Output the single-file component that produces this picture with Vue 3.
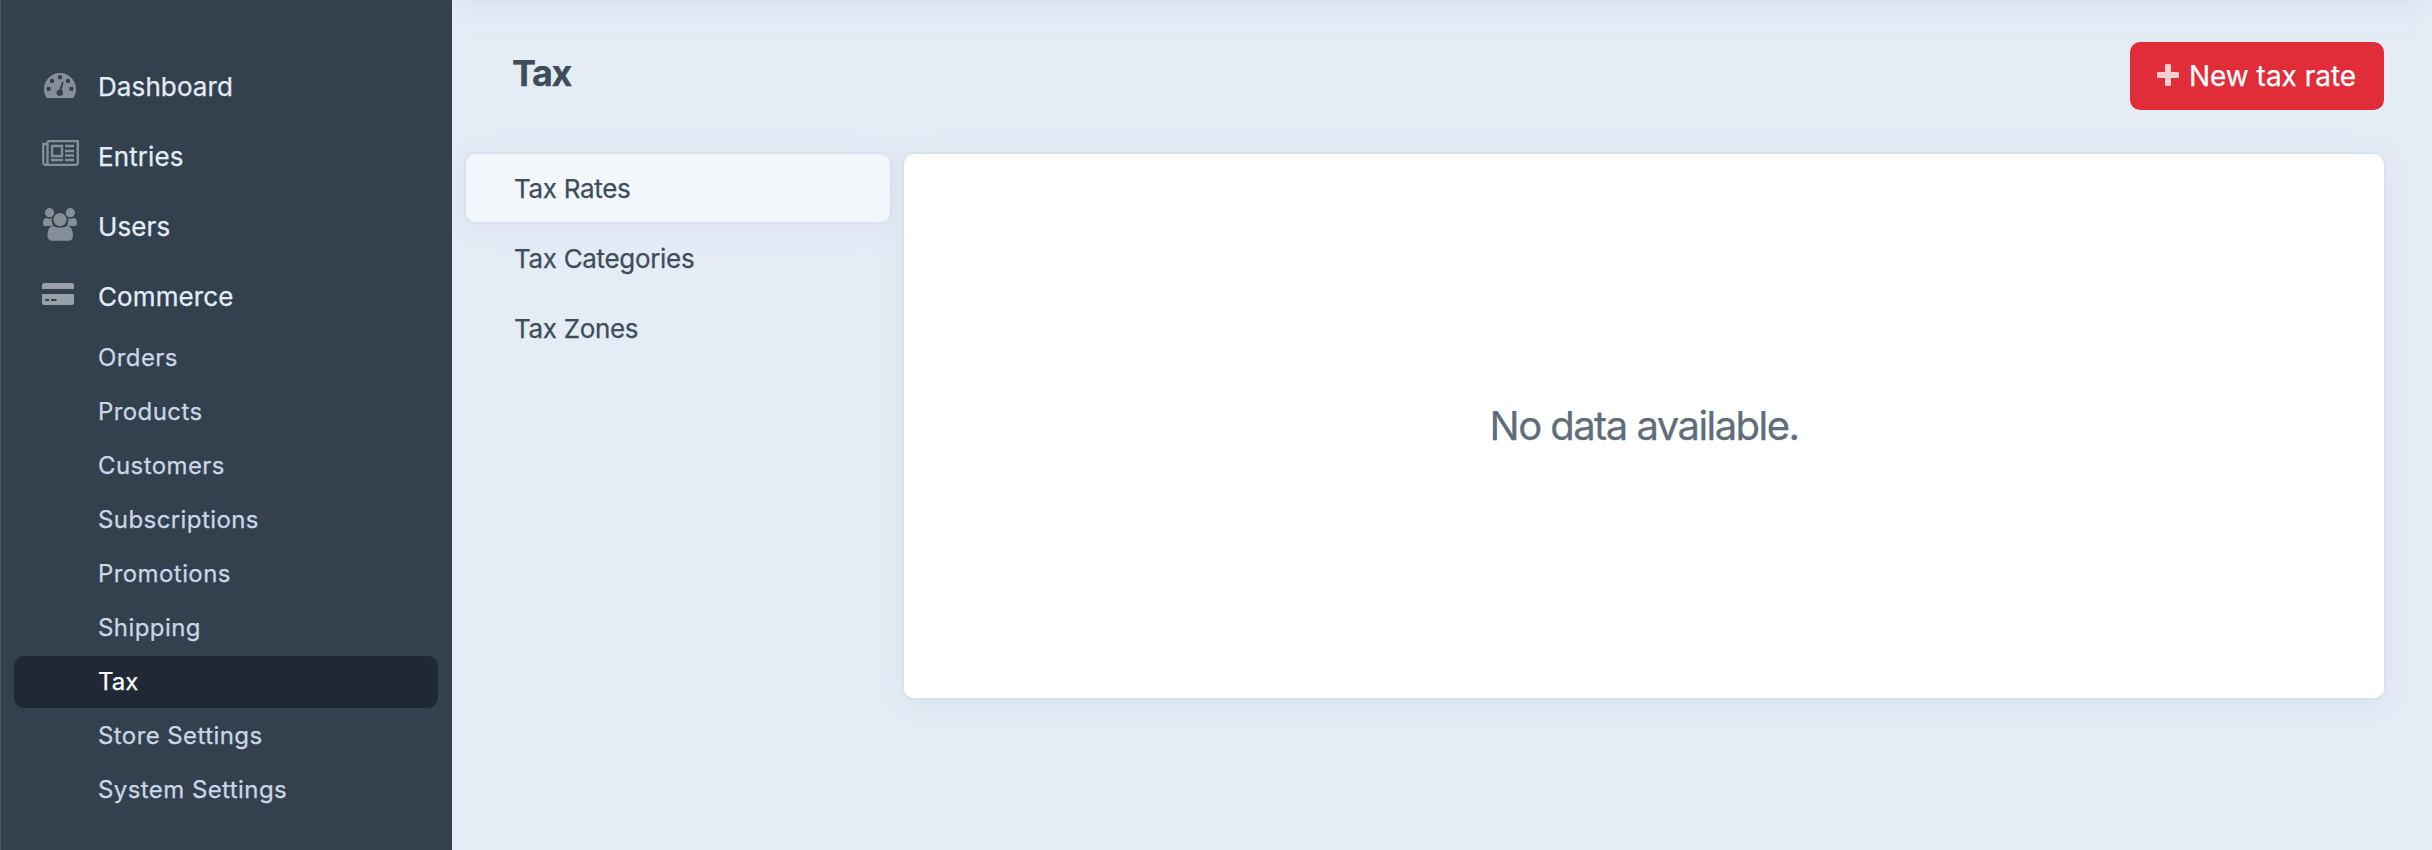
<script setup>
const main = ['Dashboard', 'Entries', 'Users', 'Commerce']
const subs = ['Orders', 'Products', 'Customers', 'Subscriptions', 'Promotions', 'Shipping', 'Tax', 'Store Settings', 'System Settings']
const taxNav = ['Tax Rates', 'Tax Categories', 'Tax Zones']
</script>

<template>
  <div class="page">
    <nav class="sidebar">
      <a v-for="name in main" :key="name" class="item">
        <span class="icon">
          <svg v-if="name === 'Dashboard'" class="gauge" width="32" height="25" viewBox="0 0 32 25">
            <path fill-rule="evenodd" d="M2.6 25C.9 22.400 0 19.400 0 16A16 16 0 0 1 32 16C32 19.400 31.100 22.400 29.400 25Z M16 2a2.200 2.200 0 1 0 0 4.400a2.200 2.200 0 0 0 0-4.400Z M8 5.700a2.200 2.200 0 1 0 0 4.400a2.200 2.200 0 0 0 0-4.400Z M24 5.700a2.200 2.200 0 1 0 0 4.400a2.200 2.200 0 0 0 0-4.400Z M4.600 13.700a2.200 2.200 0 1 0 0 4.400a2.200 2.200 0 0 0 0-4.400Z M27.400 13.700a2.200 2.200 0 1 0 0 4.400a2.200 2.200 0 0 0 0-4.400Z M18 8.900L15.400 16.400A3.300 3.300 0 1 0 17.700 17L19.500 9.400A.8.800 0 0 0 18 8.900Z" />
          </svg>
          <svg v-else-if="name === 'Entries'" class="news" width="37" height="26" viewBox="0 0 37 26" fill="none" stroke="currentColor" stroke-width="2.300">
            <path d="M5.500 1.200H35.800V23a2 2 0 0 1-2 1.800H3.200a2 2 0 0 1-2-2V4H5.500M5.500 1.200V23a2 2 0 0 1-2 1.800" />
            <path d="M10 6H20V16H10ZM23 6H32M23 11H32M23 15.500H32M9 20H21M23 20H32" />
          </svg>
          <svg v-else-if="name === 'Users'" class="people" width="34" height="33" viewBox="0 0 34 33">
            <circle cx="6.500" cy="4.700" r="4.600" /><circle cx="27.300" cy="4.700" r="4.600" />
            <circle cx="17" cy="11.600" r="6.600" />
            <path d="M2.800 10C.8 10.400 0 12.500 0 15.500C0 17.400 1 18 3 18H7.800Q9.200 18 10 17C8.700 15 8.500 12.300 8.900 10.200C7 11 4.500 10.800 2.800 10Z" />
            <path d="M31.200 10C33.200 10.400 34 12.500 34 15.500C34 17.400 33 18 31 18H26.200Q24.800 18 24 17C25.300 15 25.500 12.300 25.100 10.200C27 11 29.500 10.800 31.200 10Z" />
            <path d="M10 17.800C6 18.500 4.500 23 4.500 28C4.500 31 6.500 32.800 9.500 32.800H25C28 32.800 30 31 30 28C30 23 28.500 18.500 24.300 17.800C20.500 20.300 13.500 20.300 10 17.800Z" />
          </svg>
          <svg v-else class="card-icon" width="32" height="22" viewBox="0 0 32 22">
            <path fill-rule="evenodd" d="M2 0H30a2 2 0 0 1 2 2V6H0V2a2 2 0 0 1 2-2Z M0 11H32V20a2 2 0 0 1-2 2H2a2 2 0 0 1-2-2Z M3.300 16V18H7V16Z M9 16V18H14.500V16Z" />
          </svg>
        </span>
        {{ name }}
      </a>
      <a v-for="name in subs" :key="name" class="sub" :class="{ active: name === 'Tax' }">{{ name }}</a>
    </nav>
    <main class="main">
      <header class="header">
        <h1>Tax</h1>
        <button class="btn">
          <svg width="22" height="22" viewBox="0 0 22 22"><path d="M9 0H13a1 1 0 0 1 1 1V8H21a1 1 0 0 1 1 1V13a1 1 0 0 1-1 1H14V21a1 1 0 0 1-1 1H9a1 1 0 0 1-1-1V14H1a1 1 0 0 1-1-1V9a1 1 0 0 1 1-1H8V1a1 1 0 0 1 1-1Z" /></svg>
          <span>New tax rate</span>
        </button>
      </header>
      <div class="body">
        <nav class="tax-nav">
          <a v-for="(name, i) in taxNav" :key="name" :class="{ selected: i === 0 }">{{ name }}</a>
        </nav>
        <section class="pane"><p>No data available.</p></section>
      </div>
    </main>
  </div>
</template>

<style>
body { margin: 0; }
</style>

<style scoped>
.page { display: flex; width: 2432px; height: 850px; overflow: hidden; background: #e4ecf6; font-family: Inter, "Liberation Sans", sans-serif; color: #3f4d5a; -webkit-text-stroke: .25px currentColor; }
.sidebar { box-sizing: border-box; width: 452px; height: 850px; flex: none; display: flex; flex-direction: column; gap: 2px; padding: 52px 14px 0 13px; background: #33404d; border-left: 1px solid #475564; }
.item { display: flex; align-items: center; height: 68px; font-size: 26px; color: #e3ecf8; letter-spacing: .1px; padding-top: 1px; box-sizing: border-box; }
.icon { width: 56px; margin-left: 28px; height: 68px; display: flex; align-items: center; color: #868f97; box-sizing: border-box; }
.icon svg { display: block; fill: currentColor; }
.icon .news { fill: none; margin-top: -7px; }
.icon .gauge { margin: -3px 0 0 2px; }
.icon .people { margin: -5px 0 0 1px; }
.icon .card-icon { margin-top: -6px; color: #989fa8; }
.sub { height: 52px; line-height: 52px; border-radius: 10px; padding-left: 84px; font-size: 24px; letter-spacing: .42px; color: #cbd6e6; }
.sub.active { background: #1f2933; color: #fff; letter-spacing: 0; }
.main { position: relative; flex: 1; overflow: hidden; padding: 0 48px 0 14px; }
.main::before { content: ""; position: absolute; left: 14px; right: 14px; top: -100px; height: 98px; box-shadow: 0 0 0 2px #cdd8e4, 0 4px 24px rgba(190, 206, 222, .55); }
.header { display: flex; justify-content: space-between; align-items: flex-start; height: 112px; padding-top: 42px; }
h1 { margin: 9px 0 0 46px; font-size: 36px; line-height: 44px; font-weight: 700; letter-spacing: -1.4px; }
.btn { display: flex; align-items: center; box-sizing: border-box; width: 254px; height: 68px; padding: 0 0 0 27px; border: 0; border-radius: 10px; background: #e12d39; color: #fff; font: 400 28px Inter, "Liberation Sans", sans-serif; letter-spacing: -.02px; white-space: nowrap; }
.btn svg { fill: #f9ccd0; margin: -2px 10px 0 0; }
.body { display: flex; gap: 14px; }
.tax-nav { width: 424px; display: flex; flex-direction: column; gap: 2px; }
.tax-nav a { height: 68px; line-height: 70px; padding-left: 48px; border-radius: 10px; font-size: 26px; letter-spacing: -.33px; }
.tax-nav .selected, .pane { box-shadow: 0 0 0 2px rgba(205, 216, 232, .3), 0 4px 24px rgba(205, 216, 228, .5); }
.tax-nav .selected { background: #f3f6fb; }
.pane { width: 1480px; height: 544px; border-radius: 10px; background: #fff; display: flex; align-items: center; justify-content: center; }
.pane p { margin: 0; font-size: 40px; line-height: 48px; letter-spacing: -1.55px; color: #606d7b; }
</style>
